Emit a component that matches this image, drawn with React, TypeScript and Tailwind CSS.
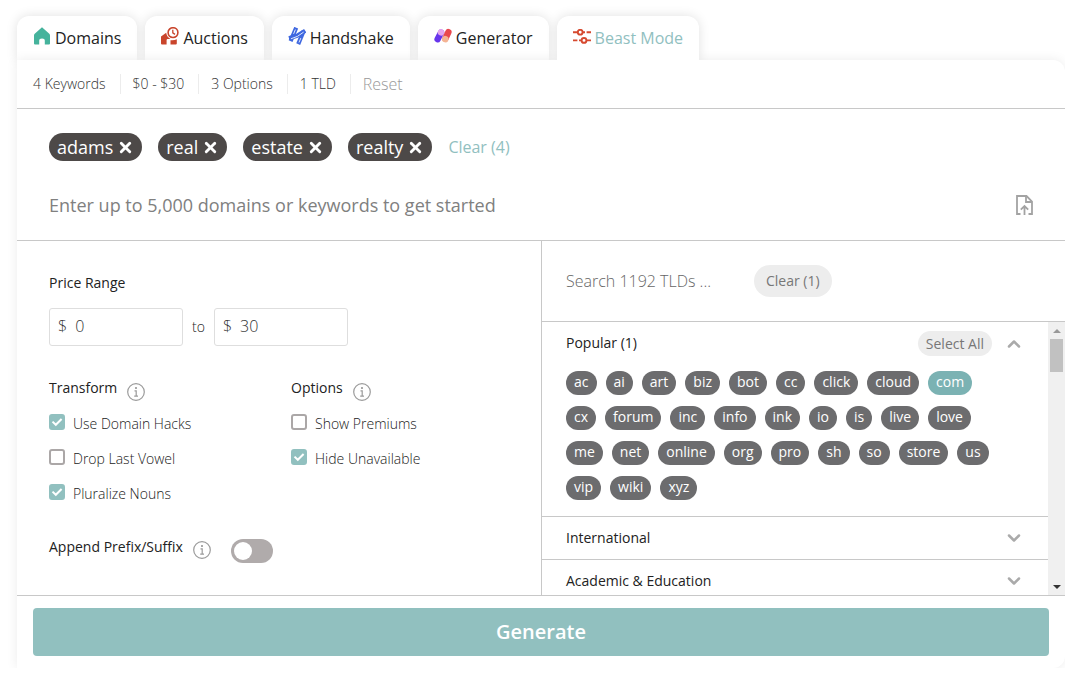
import { useState } from "react";
import type { ReactNode } from "react";
import clsx from "clsx";
import { ChevronDown, ChevronUp, X } from "lucide-react";

type TabItem = {
  label: string;
  icon: ReactNode;
};

const HouseIcon = () => (
  <svg viewBox="-1 0 18 18" className="size-[18px]" fill="#45b39c">
    <path d="M8 0.3 15.3 6.8Q16 7.5 16 8.5V16.5Q16 17.5 15 17.5H10.8V13.6Q10.8 11.4 8 11.4T5.2 13.6V17.5H1Q0 17.5 0 16.5V8.5Q0 7.5 0.7 6.8Z" />
  </svg>
);

const AuctionIcon = () => (
  <svg viewBox="0 0 18 18" className="size-[18px]">
    <path
      d="M0 9.5 5.2 5.8C5.6 8.6 7 10.8 9.5 12H6.6Q5.6 12 5.6 13.2V17.5H1Q0 17.5 0 16.5ZM9.5 13.2C12 13.5 13.8 13.2 15.8 12.2V16.6Q15.8 17.5 14.8 17.5H9.5Z"
      fill="#c9452c"
    />
    <circle cx="12" cy="5.6" r="4.9" fill="#fff" stroke="#c9452c" strokeWidth="1.6" />
    <path d="M11.8 2.8V5.9L14 7.4" fill="none" stroke="#c9452c" strokeWidth="1.3" />
  </svg>
);

const HandshakeIcon = () => (
  <svg viewBox="0 0 18 18" className="size-[18px]" fill="none" strokeLinecap="square">
    <g stroke="#3f68e0" strokeWidth="4.2">
      <path d="M7.4 2.6 3.4 12.2" />
      <path d="M14.8 6 11 15.2" />
      <path d="M3 10.6 9 8.8 15.4 4.8" />
    </g>
    <g stroke="#dfe7fc" strokeWidth="1">
      <path d="M7.2 3 5.8 6.4M12.6 11.6 11.2 15" />
      <path d="M3.4 11.6 9.4 9.4 15.2 5.4" />
    </g>
  </svg>
);

const GeneratorIcon = () => (
  <svg viewBox="0 0 18 16" className="h-4 w-[18px]" fill="none" strokeLinecap="round" strokeWidth="6.4">
    <path d="M3.6 11.2 7 4.6" stroke="#6735ec" />
    <path d="M7 4.5 7.1 4.3" stroke="#e5a5ec" />
    <path d="M14.4 4.2 11.4 10.6" stroke="#e9484e" />
    <path d="M11.3 11 11.2 11.2" stroke="#f4b494" />
  </svg>
);

const SlidersIcon = () => (
  <svg viewBox="0 0 18 15" className="h-[15px] w-[18px]" fill="none" stroke="#d6492f" strokeWidth="1.9">
    <path d="M0 3.2H4.8M9.6 3.2H12M13.6 3.2H18M0 11.4H4.4M6 11.4H8.6M13.4 11.4H18" />
    <circle cx="7.2" cy="3.2" r="2.4" />
    <circle cx="11" cy="11.4" r="2.4" />
  </svg>
);

const UploadIcon = () => (
  <svg viewBox="0 0 17 20" className="h-5 w-[17px]" fill="none" stroke="#a3a3a3" strokeWidth="1.8">
    <path d="M4.5 19H1V1H10.5L16 6.5V19H12.5" />
    <path d="M10 1V7H16" />
    <path d="M8.5 20V11.5M4.8 14.6 8.5 11 12.2 14.6" />
  </svg>
);

const InfoIcon = () => (
  <svg viewBox="0 0 18 18" className="size-[18px]" fill="none" stroke="#9b9b9b" strokeWidth="1.2">
    <circle cx="9" cy="9" r="8.3" />
    <path d="M7.5 7.8H9.2V13M7.2 13.2H11" />
    <circle cx="9" cy="5" r="0.5" fill="#9b9b9b" />
  </svg>
);

const tabs: TabItem[] = [
  { label: "Domains", icon: <HouseIcon /> },
  { label: "Auctions", icon: <AuctionIcon /> },
  { label: "Handshake", icon: <HandshakeIcon /> },
  { label: "Generator", icon: <GeneratorIcon /> },
  { label: "Beast Mode", icon: <SlidersIcon /> },
];

const summary = ["4 Keywords", "$0 - $30", "3 Options", "1 TLD"];

const popularTlds = [
  "ac", "ai", "art", "biz", "bot", "cc", "click", "cloud", "com",
  "cx", "forum", "inc", "info", "ink", "io", "is", "live", "love",
  "me", "net", "online", "org", "pro", "sh", "so", "store", "us",
  "vip", "wiki", "xyz",
];

type CheckOptionProps = {
  label: string;
  defaultChecked?: boolean;
};

const CheckOption = ({ label, defaultChecked }: CheckOptionProps) => (
  <label className="flex h-[35px] items-start gap-2 text-sm font-light text-[#222]">
    <span className="grid">
      <input
        type="checkbox"
        defaultChecked={defaultChecked}
        className="peer col-start-1 row-start-1 size-4 appearance-none rounded-[3px] border-2 border-[#aba7a7] checked:border-[#91c0bf] checked:bg-[#91c0bf]"
      />
      <svg
        viewBox="0 0 16 16"
        className="pointer-events-none col-start-1 row-start-1 hidden size-4 peer-checked:block"
        fill="none"
        stroke="#fff"
        strokeWidth="2"
      >
        <path d="M3.5 7.6 6.8 10.8 12.6 5" />
      </svg>
    </span>
    {label}
  </label>
);

type PriceInputProps = {
  label: string;
  value: string;
};

const PriceInput = ({ label, value }: PriceInputProps) => (
  <label className="flex h-[38px] w-[134px] items-center gap-2 rounded-[3px] border border-[#dedede] px-2 pb-0.5 text-base font-light text-[#333]">
    $
    <input aria-label={label} defaultValue={value} className="w-full min-w-0 outline-none" />
  </label>
);

const GroupTitle = ({ title }: { title: string }) => (
  <div className="mb-[13px] flex h-[23px] items-start gap-[10px] text-sm text-[#222]">
    {title}
    <button type="button" aria-label={`About ${title}`} className="self-end">
      <InfoIcon />
    </button>
  </div>
);

const App = () => {
  const [activeTab, setActiveTab] = useState("Beast Mode");
  const [keywords, setKeywords] = useState(["adams", "real", "estate", "realty"]);
  const [selected, setSelected] = useState("com");

  return (
    <div className="bg-white pt-4 pl-[17px] font-['Open_Sans',sans-serif] text-[#222]">
      <nav className="flex gap-2">
        {tabs.map(({ label, icon }) => (
          <button
            key={label}
            type="button"
            onClick={() => setActiveTab(label)}
            className={clsx(
              "flex h-11 items-center gap-1 rounded-t-xl bg-white px-4 text-base shadow-[0_0_12px_rgba(0,0,0,0.12)]",
              activeTab === label && "relative z-10 text-[#91c0bf] [clip-path:inset(-16px_-16px_0_-16px)]",
            )}
          >
            <span className="pb-1">{icon}</span>
            {label}
          </button>
        ))}
      </nav>

      <main className="relative rounded-r-xl bg-white shadow-[0_0_12px_rgba(0,0,0,0.08)]">
        <div className="flex h-[49px] items-center border-b border-[#c8c8c8] px-4 text-sm font-light text-[#333]">
          {summary.map((item) => (
            <span key={item} className="mr-3 border-r border-[#ececec] pr-3.5">
              {item}
            </span>
          ))}
          <button type="button" className="text-base text-[#999]">Reset</button>
        </div>

        <section className="border-b border-[#c8c8c8] px-8 pt-6 pb-[19px]">
          <div className="flex h-7 items-center gap-4">
            {keywords.map((keyword) => (
              <span key={keyword} className="flex h-7 items-center gap-1 rounded-full bg-[#4d4948] px-2 text-lg text-white">
                {keyword}
                <button
                  type="button"
                  aria-label={`Remove ${keyword}`}
                  onClick={() => setKeywords(keywords.filter((k) => k !== keyword))}
                >
                  <X className="size-[17px]" strokeWidth={4} />
                </button>
              </span>
            ))}
            <button type="button" onClick={() => setKeywords([])} className="text-base text-[#91c0bf]">
              Clear ({keywords.length})
            </button>
          </div>
          <div className="mt-7 flex h-8 items-center">
            <input
              aria-label="Domains or keywords"
              placeholder="Enter up to 5,000 domains or keywords to get started"
              className="min-w-0 flex-1 text-lg outline-none placeholder:text-[#808080]"
            />
            <button type="button" aria-label="Upload a list">
              <UploadIcon />
            </button>
          </div>
        </section>

        <div className="grid grid-cols-2 border-b border-[#c8c8c8]">
          <section className="px-8 pt-8">
            <h2 className="text-sm">Price Range</h2>
            <div className="mt-[15px] flex items-center gap-[9px] text-sm font-light">
              <PriceInput label="Minimum price" value="0" />
              to
              <PriceInput label="Maximum price" value="30" />
            </div>
            <div className="mt-8 grid grid-cols-[242px_1fr]">
              <div>
                <GroupTitle title="Transform" />
                <CheckOption label="Use Domain Hacks" defaultChecked />
                <CheckOption label="Drop Last Vowel" />
                <CheckOption label="Pluralize Nouns" defaultChecked />
              </div>
              <div>
                <GroupTitle title="Options" />
                <CheckOption label="Show Premiums" />
                <CheckOption label="Hide Unavailable" defaultChecked />
              </div>
            </div>
            <div className="mt-[18px] flex items-start">
              <label htmlFor="append" className="text-sm">Append Prefix/Suffix</label>
              <button type="button" aria-label="About prefix and suffix" className="mt-1 ml-[10px]">
                <InfoIcon />
              </button>
              <input
                id="append"
                type="checkbox"
                role="switch"
                className="mt-0.5 ml-5 h-6 w-[42px] appearance-none rounded-full bg-[#b0abab] p-[3px] before:block before:size-[18px] before:rounded-full before:bg-white checked:bg-[#91c0bf] checked:before:ml-auto"
              />
            </div>
          </section>

          <section className="border-l border-[#c8c8c8]">
            <div className="flex h-[81px] items-center border-b border-[#c8c8c8] px-6">
              <input
                type="search"
                aria-label="Search TLDs"
                placeholder="Search 1192 TLDs ..."
                className="w-[188px] text-base font-light outline-none placeholder:text-[#666]"
              />
              <button type="button" className="h-8 rounded-full bg-[#ededed] px-3 text-sm text-[#777]">
                Clear (1)
              </button>
            </div>
            <div className="flex h-[273px]">
              <div className="min-w-0 flex-1 overflow-hidden text-sm">
                <div className="h-[195px] border-b border-[#c8c8c8] pl-6">
                  <div className="flex h-[43px] items-center pr-6">
                    <h3 className="flex-1 pb-0.5">Popular (1)</h3>
                    <button type="button" className="mr-3 h-[25px] rounded-full bg-[#ededed] px-2 text-[#777]">
                      Select All
                    </button>
                    <button type="button" aria-label="Collapse Popular">
                      <ChevronUp className="size-5 text-[#aaa]" strokeWidth={3} />
                    </button>
                  </div>
                  <div className="flex flex-wrap gap-x-[9px] gap-y-[11px] pt-[6px] pr-10">
                    {popularTlds.map((tld) => (
                      <button
                        key={tld}
                        type="button"
                        onClick={() => setSelected(tld)}
                        className={clsx(
                          "h-6 rounded-full px-2 pb-0.5 text-sm text-white",
                          selected === tld ? "bg-[#7bb2b3]" : "bg-[#6c6c6e]",
                        )}
                      >
                        {tld}
                      </button>
                    ))}
                  </div>
                </div>
                {["International", "Academic & Education"].map((group) => (
                  <button
                    key={group}
                    type="button"
                    className="flex h-[43px] w-full items-center justify-between border-b border-[#c8c8c8] px-6 text-left"
                  >
                    {group}
                    <ChevronDown className="size-5 text-[#aaa]" strokeWidth={3} />
                  </button>
                ))}
              </div>
              <div className="flex w-[17px] flex-col items-center bg-[#f0f0f0]">
                <div className="flex h-[17px] items-center">
                  <div className="border-x-4 border-b-4 border-x-transparent border-b-[#999]" />
                </div>
                <div className="h-[33px] w-[13px] bg-[#c1c1c1]" />
                <div className="mt-auto flex h-[17px] items-center">
                  <div className="border-x-4 border-t-4 border-x-transparent border-t-[#333]" />
                </div>
              </div>
            </div>
          </section>
        </div>

        <div className="px-4 py-3">
          <button type="button" className="h-12 w-full rounded-[4px] bg-[#91c0bf] text-xl font-semibold text-white">
            Generate
          </button>
        </div>
      </main>
    </div>
  );
};

export default App;
